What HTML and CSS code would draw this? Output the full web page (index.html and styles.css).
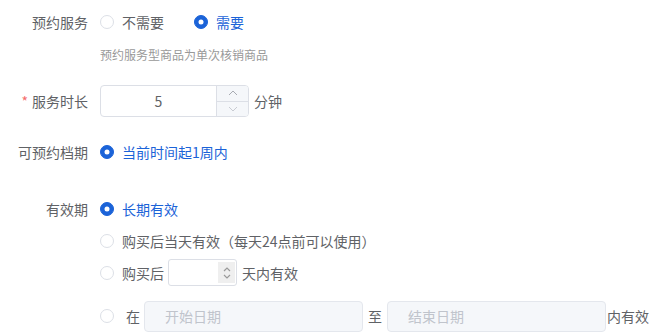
FILE: index.html
```
<!DOCTYPE html>
<html lang="zh">
<head>
<meta charset="utf-8">
<link rel="stylesheet" href="styles.css">
</head>
<body>
<div class="form">
  <div class="item item-1">
    <div class="label">预约服务</div>
    <div class="content">
      <div class="radios">
        <label class="radio"><span class="dot"></span><span class="rtext">不需要</span></label>
        <label class="radio checked"><span class="dot"></span><span class="rtext">需要</span></label>
      </div>
      <div class="hint">预约服务型商品为单次核销商品</div>
    </div>
  </div>

  <div class="item item-2">
    <div class="label"><span class="req">*</span>服务时长</div>
    <div class="content row">
      <div class="num">
        <div class="num-value">5</div>
        <div class="num-ctrl">
          <div class="num-btn"><svg width="10" height="6" viewBox="0 0 10 6"><path d="M1 5 L5 1 L9 5" fill="none" stroke="#a8abb2" stroke-width="1"/></svg></div>
          <div class="num-btn"><svg width="10" height="6" viewBox="0 0 10 6"><path d="M1 1 L5 5 L9 1" fill="none" stroke="#c8cbd2" stroke-width="1"/></svg></div>
        </div>
      </div>
      <span class="after">分钟</span>
    </div>
  </div>

  <div class="item item-3">
    <div class="label">可预约档期</div>
    <div class="content">
      <label class="radio checked"><span class="dot"></span><span class="rtext">当前时间起1周内</span></label>
    </div>
  </div>

  <div class="item item-4">
    <div class="label">有效期</div>
    <div class="content">
      <div class="line l1"><label class="radio checked"><span class="dot"></span><span class="rtext">长期有效</span></label></div>
      <div class="line l2"><label class="radio"><span class="dot"></span><span class="rtext">购买后当天有效（每天24点前可以使用）</span></label></div>
      <div class="line l3">
        <label class="radio"><span class="dot"></span><span class="rtext">购买后</span></label>
        <div class="small-input">
          <div class="spin">
            <svg width="10" height="16" viewBox="0 0 10 16"><path d="M2 6 L5 3 L8 6" fill="none" stroke="#9a9a9a" stroke-width="1.2"/><path d="M2 10 L5 13 L8 10" fill="none" stroke="#9a9a9a" stroke-width="1.2"/></svg>
          </div>
        </div>
        <span class="after2">天内有效</span>
      </div>
      <div class="line l4">
        <label class="radio"><span class="dot"></span></label>
        <span class="zai">在</span>
        <div class="date">开始日期</div>
        <span class="zhi">至</span>
        <div class="date">结束日期</div>
        <span class="nei">内有效</span>
      </div>
    </div>
  </div>
</div>
</body>
</html>
```

FILE: styles.css
```
* { box-sizing: border-box; }
html, body { margin: 0; padding: 0; background: #fff; }
body {
  font-family: "Noto Sans CJK SC", "Noto Sans", sans-serif;
  font-size: 14px;
  color: #606266;
}
.form { padding-top: 6px; }
.item { display: flex; align-items: flex-start; }
.label {
  width: 88px;
  flex: none;
  text-align: right;
  line-height: 32px;
  height: 32px;
  color: #606266;
  white-space: nowrap;
}
.req { color: #f56c6c; margin-right: 4px; }
.content { margin-left: 12px; }
.row { display: flex; align-items: center; }

.radios { display: flex; height: 32px; align-items: center; }
.radio { display: inline-flex; align-items: center; height: 32px; cursor: pointer; color: #606266; }
.radios .radio + .radio { margin-left: 30px; }
.dot {
  width: 14px; height: 14px; border-radius: 50%;
  border: 1px solid #dcdfe6; background: #fff;
  display: inline-block; position: relative; flex: none;
}
.radio.checked .dot { background: #1b63d8; border-color: #1b63d8; }
.radio.checked .dot::after {
  content: ""; position: absolute; left: 50%; top: 50%;
  width: 5px; height: 5px; border-radius: 50%; background: #fff;
  transform: translate(-50%, -50%);
}
.rtext { margin-left: 8px; }
.radio.checked .rtext { color: #1b63d8; }

.hint { font-size: 12px; color: #999; line-height: 18px; margin-top: 8px; }

.item-2 { margin-top: 21px; }
.num {
  width: 149px; height: 32px; border: 1px solid #dcdfe6; border-radius: 4px;
  display: flex; overflow: hidden;
}
.num-value { flex: 1; text-align: center; line-height: 30px; color: #606266; padding-left: 0; }
.num-ctrl { width: 32px; border-left: 1px solid #dcdfe6; background: #f5f7fa; display: flex; flex-direction: column; }
.num-btn { flex: 1; display: flex; align-items: center; justify-content: center; }
.num-btn + .num-btn { border-top: 1px solid #dcdfe6; }
.after { margin-left: 5px; }

.item-3 { margin-top: 19px; }
.item-4 { margin-top: 25px; }
.line { display: flex; align-items: center; height: 32px; }
.l3 { height: 31px; }
.l4 { margin-top: 12px; }
.small-input {
  width: 69px; height: 27px; margin-left: 4px;
  border: 1px solid #dcdfe6; border-radius: 3px; position: relative;
  display: flex; align-items: center; justify-content: flex-end; padding-right: 1px;
}
.spin { width: 17px; height: 21px; background: #efefef; display: flex; align-items: center; justify-content: center; }
.after2 { margin-left: 5px; }
.zai { margin-left: 12px; }
.date {
  width: 219px; height: 31px; margin-left: 4px;
  border: 1px solid #e4e7ed; border-radius: 4px; background: #f5f7fa;
  color: #c0c4cc; line-height: 29px; padding-left: 20px;
}
.zhi { margin: 0 5px; }
.date + .zhi + .date { margin-left: 0; }
.nei { margin-left: 1px; }
```
